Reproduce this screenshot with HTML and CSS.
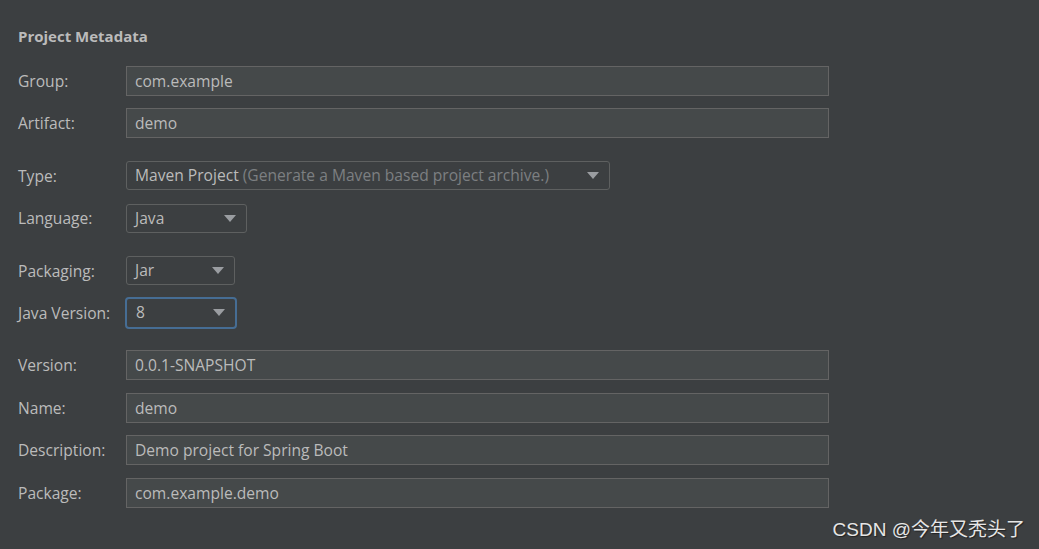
FILE: index.html
```html
<!DOCTYPE html>
<html>
<head>
<meta charset="utf-8">
<link rel="stylesheet" href="styles.css">
</head>
<body>
<div class="page">
  <h1 class="title">Project Metadata</h1>
  <div class="form">
    <section class="group">
      <div class="row"><span class="label">Group:</span><div class="field">com.example</div></div>
      <div class="row"><span class="label">Artifact:</span><div class="field">demo</div></div>
    </section>
    <section class="group">
      <div class="row"><span class="label">Type:</span><div class="combo combo-type"><span class="val">Maven Project <span class="hint">(Generate a Maven based project archive.)</span></span><span class="arrow"></span></div></div>
      <div class="row"><span class="label">Language:</span><div class="combo combo-lang"><span class="val">Java</span><span class="arrow"></span></div></div>
    </section>
    <section class="group">
      <div class="row"><span class="label">Packaging:</span><div class="combo combo-pack"><span class="val">Jar</span><span class="arrow"></span></div></div>
      <div class="row"><span class="label">Java Version:</span><div class="combo combo-ver focused"><span class="val">8</span><span class="arrow"></span></div></div>
    </section>
    <section class="group">
      <div class="row"><span class="label">Version:</span><div class="field">0.0.1-SNAPSHOT</div></div>
      <div class="row"><span class="label">Name:</span><div class="field">demo</div></div>
      <div class="row"><span class="label">Description:</span><div class="field">Demo project for Spring Boot</div></div>
      <div class="row"><span class="label">Package:</span><div class="field">com.example.demo</div></div>
    </section>
  </div>
</div>
<div class="watermark">CSDN @今年又秃头了</div>
</body>
</html>
```
FILE: styles.css
```css
html, body {
  margin: 0;
  padding: 0;
  background: #3c3f41;
  width: 1039px;
  height: 549px;
  overflow: hidden;
}
body {
  font-family: "Open Sans", "Noto Sans", sans-serif;
  font-size: 15.6px;
  color: #bbbbbb;
  position: relative;
}
.page {
  padding: 26px 0 0 18px;
}
.title {
  margin: 0;
  font-size: 15px;
  font-weight: 700;
  line-height: 20px;
  color: #bbbbbb;
}
.form {
  margin-top: 20px;
  display: flex;
  flex-direction: column;
  gap: 22.4px;
}
.group {
  display: flex;
  flex-direction: column;
  gap: 12.4px;
}
.row {
  display: flex;
  align-items: center;
  height: 30px;
}
.label {
  width: 108px;
  flex: none;
}
.field {
  box-sizing: border-box;
  width: 703px;
  height: 30px;
  background: #45494a;
  border: 1px solid #646464;
  padding: 0 8px;
  line-height: 28px;
}
.combo {
  box-sizing: border-box;
  height: 29px;
  border: 1px solid #5e6060;
  border-radius: 3px;
  padding: 0 8px;
  display: flex;
  align-items: center;
  justify-content: space-between;
  line-height: 27px;
}
.combo-type { width: 484px; }
.combo-lang { width: 121px; }
.combo-pack { width: 109px; }
.combo-ver {
  width: 112px;
  height: 32px;
  margin-left: -1px;
  border: 2px solid #466d94;
  border-radius: 4px;
  padding-left: 9px;
}
.hint { color: #7c7f82; }
.arrow {
  width: 0;
  height: 0;
  border-left: 6px solid transparent;
  border-right: 6px solid transparent;
  border-top: 7px solid #9a9da1;
  margin-right: 2px;
}
.watermark {
  position: absolute;
  right: 14px;
  bottom: 8px;
  font-family: "Liberation Sans", "Noto Sans CJK SC", sans-serif;
  font-size: 19px;
  color: #e6e6e6;
  text-shadow: 1px 1px 1px #222;
}
```
